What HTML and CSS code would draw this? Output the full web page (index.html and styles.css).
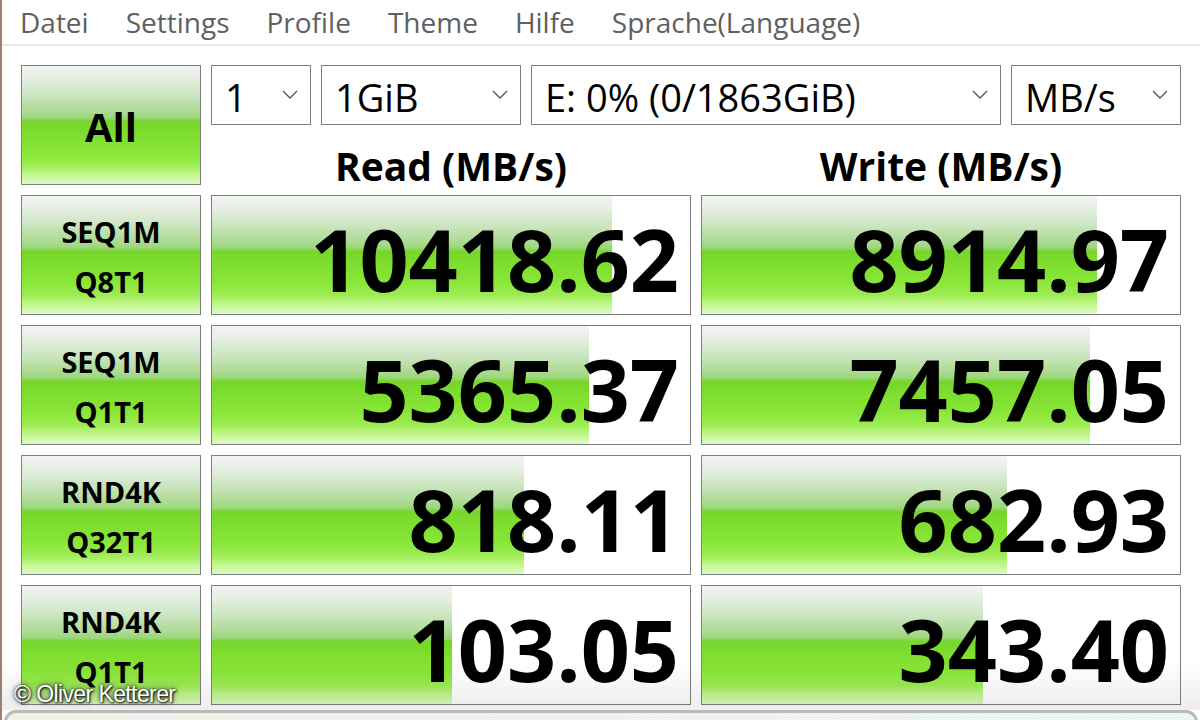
FILE: index.html
```html
<!DOCTYPE html>
<html lang="de">
<head>
<meta charset="utf-8">
<title>CrystalDiskMark</title>
<link rel="stylesheet" href="styles.css">
</head>
<body>
<div class="window">
  <nav class="menubar">
    <span class="menu-item">Datei</span>
    <span class="menu-item">Settings</span>
    <span class="menu-item">Profile</span>
    <span class="menu-item">Theme</span>
    <span class="menu-item">Hilfe</span>
    <span class="menu-item">Sprache(Language)</span>
  </nav>

  <main class="grid">
    <div class="btn btn-all">All</div>

    <div class="selects">
      <div class="select s-count"><span>1</span><svg class="chev" viewBox="0 0 16 9"><path d="M1 1 L8 8 L15 1"/></svg></div>
      <div class="select s-size"><span>1GiB</span><svg class="chev" viewBox="0 0 16 9"><path d="M1 1 L8 8 L15 1"/></svg></div>
      <div class="select s-drive"><span>E: 0% (0/1863GiB)</span><svg class="chev" viewBox="0 0 16 9"><path d="M1 1 L8 8 L15 1"/></svg></div>
      <div class="select s-unit"><span>MB/s</span><svg class="chev" viewBox="0 0 16 9"><path d="M1 1 L8 8 L15 1"/></svg></div>
    </div>

    <div class="head">Read (MB/s)</div>
    <div class="head">Write (MB/s)</div>

    <div class="btn btn-label"><span>SEQ1M</span><span>Q8T1</span></div>
    <div class="value" style="--w:400px">10418.62</div>
    <div class="value" style="--w:395px">8914.97</div>

    <div class="btn btn-label"><span>SEQ1M</span><span>Q1T1</span></div>
    <div class="value" style="--w:377px">5365.37</div>
    <div class="value" style="--w:388px">7457.05</div>

    <div class="btn btn-label"><span>RND4K</span><span>Q32T1</span></div>
    <div class="value" style="--w:312px">818.11</div>
    <div class="value" style="--w:305px">682.93</div>

    <div class="btn btn-label"><span>RND4K</span><span>Q1T1</span></div>
    <div class="value" style="--w:240px">103.05</div>
    <div class="value" style="--w:281px">343.40</div>
  </main>

  <div class="status"></div>
  <div class="watermark">© Oliver Ketterer</div>
</div>
</body>
</html>
```

FILE: styles.css
```css
html, body {
  margin: 0;
  padding: 0;
  background: #ffffff;
}

.window {
  position: relative;
  width: 1200px;
  height: 720px;
  overflow: hidden;
  box-sizing: border-box;
  border-left: 2px solid #9a8073;
  background: #ffffff;
  font-family: "Open Sans", "Noto Sans", sans-serif;
  color: #000;
}

.window::after {
  content: "";
  position: absolute;
  left: 0;
  right: 0;
  top: 660px;
  height: 50px;
  background: linear-gradient(to bottom, rgba(0,0,0,0) 0%, rgba(0,0,0,0.07) 100%);
  pointer-events: none;
}

/* menu */
.menubar {
  display: flex;
  align-items: center;
  gap: 37px;
  height: 44px;
  padding-left: 18px;
  border-bottom: 2px solid #e8e8e8;
  box-sizing: content-box;
}

.menu-item {
  font-size: 28px;
  color: #606060;
  line-height: 44px;
}

/* grid */
.grid {
  display: grid;
  grid-template-columns: 180px 480px 480px;
  grid-template-rows: 60px 50px 120px 120px 120px 120px;
  column-gap: 10px;
  row-gap: 10px;
  padding: 19px 0 0 19px;
}

.btn {
  box-sizing: border-box;
  border: 1px solid #7f7f7f;
  background: linear-gradient(to bottom,
    #f3f5f3 0%,
    #e6efe3 10%,
    #cde6c3 24%,
    #aedb94 38%,
    #9ad77a 44%,
    #76d62a 47%,
    #7ddc2e 56%,
    #88e637 72%,
    #9cec52 84%,
    #c6f796 93%,
    #dcfbc2 100%);
  font-weight: 700;
  display: flex;
  flex-direction: column;
  align-items: center;
  justify-content: center;
}

.btn-all {
  grid-row: 1 / span 2;
  grid-column: 1;
  font-size: 40px;
  padding-top: 2px;
}

.btn-label {
  font-size: 29px;
  line-height: 50px;
  padding-top: 4px;
}

.selects {
  grid-column: 2 / span 2;
  display: flex;
  gap: 10px;
}

.select {
  box-sizing: border-box;
  height: 60px;
  border: 1px solid #7f7f7f;
  display: flex;
  align-items: center;
  justify-content: space-between;
  padding: 4px 12px 0 13px;
  font-size: 38px;
  background: #fff;
}

.select span { line-height: 1; }

.s-count { width: 100px; }
.s-size { width: 200px; }
.s-drive { width: 470px; }
.s-unit { width: 170px; }

.chev {
  width: 16px;
  height: 9px;
  margin-top: -6px;
  flex: none;
}

.chev path {
  fill: none;
  stroke: #555;
  stroke-width: 1.4;
}

.head {
  font-size: 39px;
  font-weight: 700;
  text-align: center;
  line-height: 50px;
  padding-top: 6px;
}

.value {
  box-sizing: border-box;
  border: 1px solid #7f7f7f;
  background-color: #fff;
  background-image: linear-gradient(to bottom,
    #f3f5f3 0%,
    #e6efe3 10%,
    #cde6c3 24%,
    #aedb94 38%,
    #9ad77a 44%,
    #76d62a 47%,
    #7ddc2e 56%,
    #88e637 72%,
    #9cec52 84%,
    #c6f796 93%,
    #dcfbc2 100%);
  background-repeat: no-repeat;
  background-size: var(--w) 100%;
  font-size: 86px;
  font-weight: 700;
  text-align: right;
  line-height: 1;
  padding: 8px 11px 0 0;
  display: flex;
  align-items: center;
  justify-content: flex-end;
}

/* bottom box */
.status {
  position: absolute;
  left: 2px;
  right: 2px;
  top: 710px;
  height: 30px;
  border: 3px solid #b9b9b9;
  border-radius: 12px;
  background: linear-gradient(to right, #f6efe9, #f0f2ee 50%, #eaf6f0);
}

.watermark {
  position: absolute;
  left: 12px;
  top: 681px;
  font-family: "Liberation Sans", Arial, sans-serif;
  font-size: 23px;
  letter-spacing: -0.6px;
  color: #ffffff;
  text-shadow: 0 0 3px rgba(0,0,0,0.9), 0 0 7px rgba(0,0,0,0.6), 1px 1px 2px rgba(0,0,0,0.8);
  z-index: 2;
}
```
